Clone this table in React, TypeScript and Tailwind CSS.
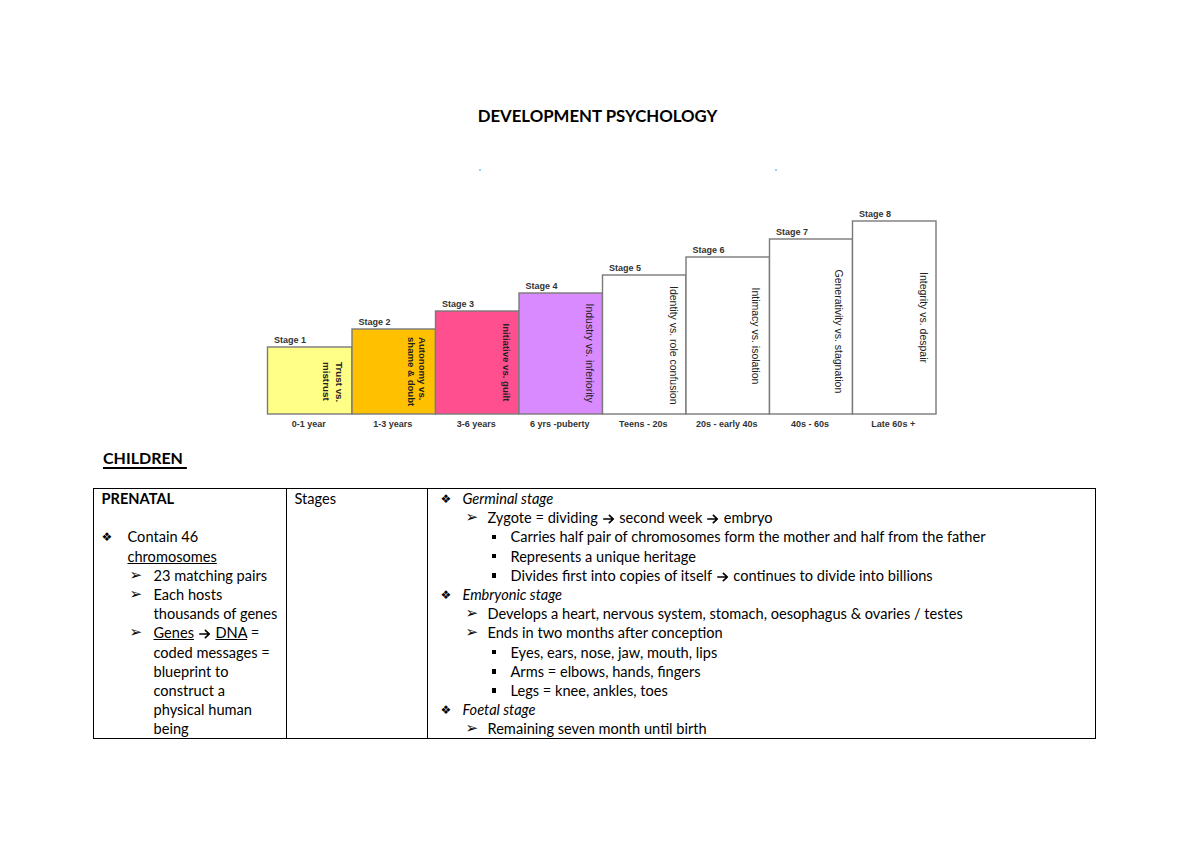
import React from "react";

const stages = [
  { n: 1, fill: "#FFFF88", top: 347, age: "0-1 year", lines: ["Trust vs.", "mistrust"], cx: [340, 327], ty: 362, bold: true, fs: 9.8 },
  { n: 2, fill: "#FFC000", top: 329, age: "1-3 years", lines: ["Autonomy vs.", "shame & doubt"], cx: [422.3, 411.7], ty: 337, bold: true, fs: 9.6 },
  { n: 3, fill: "#FF4F8F", top: 311, age: "3-6 years", lines: ["Initiative vs. guilt"], cx: [506.7], ty: 323.5, bold: true, fs: 9.6 },
  { n: 4, fill: "#D98AFF", top: 293, age: "6 yrs -puberty", lines: ["Industry vs. inferiority"], cx: [590], ty: 303.5, bold: false, fs: 10.5 },
  { n: 5, fill: "#FFFFFF", top: 275, age: "Teens - 20s", lines: ["Identity vs. role confusion"], cx: [674], ty: 286, bold: false, fs: 10.5 },
  { n: 6, fill: "#FFFFFF", top: 257, age: "20s - early 40s", lines: ["Intimacy vs. isolation"], cx: [755.7], ty: 287.5, bold: false, fs: 10.5 },
  { n: 7, fill: "#FFFFFF", top: 239, age: "40s - 60s", lines: ["Generativity vs. stagnation"], cx: [839], ty: 269.5, bold: false, fs: 10.5 },
  { n: 8, fill: "#FFFFFF", top: 221, age: "Late 60s +", lines: ["Integrity vs. despair"], cx: [923.3], ty: 272, bold: false, fs: 10.5 },
];

const lefts = [267.5, 352, 435.5, 519, 602.5, 686, 769.5, 852.5, 936];

function Chart() {
  return (
    <svg width="700" height="240" viewBox="255 200 700 240" className="block ml-[255px]">
      {stages.map((s, i) => {
        const x = lefts[i];
        const w = lefts[i + 1] - x;
        return (
          <g key={s.n}>
            <rect x={x} y={s.top} width={w} height={414 - s.top} fill={s.fill} stroke="#7a7a7a" strokeWidth="1.4" />
            <text x={x + 6.5} y={s.top - 4.5} fontFamily="'Liberation Sans', Arial, sans-serif" fontWeight="bold" fontSize="9" fill="#333">
              Stage {s.n}
            </text>
            <text x={x + w / 2 - 1} y={427} textAnchor="middle" fontFamily="'Liberation Sans', Arial, sans-serif" fontWeight="bold" fontSize="9" fill="#333">
              {s.age}
            </text>
            {s.lines.map((l, j) => (
              <text
                key={j}
                x={s.cx[j] - 3.6}
                y={s.ty}
                transform={`rotate(90 ${s.cx[j] - 3.6} ${s.ty})`}
                fontFamily="'Liberation Sans', Arial, sans-serif"
                fontWeight={s.bold ? "bold" : "normal"}
                fontSize={s.fs}
                fill="#222"
              >
                {l}
              </text>
            ))}
          </g>
        );
      })}
    </svg>
  );
}

function Diamond() {
  return <span className="font-['DejaVu_Sans',sans-serif] text-[12px] leading-none">❖</span>;
}
function Arrow() {
  return <span className="font-['DejaVu_Sans',sans-serif] text-[15px] leading-none">➢</span>;
}
function Square() {
  return <span className="block w-[4.5px] h-[4.5px] bg-black ml-[1px]" />;
}
function R() {
  return (
    <svg width="12" height="10" viewBox="0 0 12 10" className="inline-block align-[-1px] mx-[1px]">
      <path d="M0.8 5 H10.2 M6.4 1.3 L10.3 5 L6.4 8.7" fill="none" stroke="#000" strokeWidth="1.7" strokeLinecap="round" strokeLinejoin="round" />
    </svg>
  );
}

function L({ children, pad, bw, bullet }: { children?: React.ReactNode; pad: string; bw: string; bullet?: React.ReactNode }) {
  return (
    <div className={`flex h-[19.2px] items-center whitespace-nowrap ${pad}`}>
      <span className={`${bw} shrink-0 flex items-center`}>{bullet}</span>
      <span>{children}</span>
    </div>
  );
}

export default function App() {
  return (
    <div className="w-[1200px] h-[848px] bg-white text-black overflow-hidden font-['Lato','Open_Sans',sans-serif] text-[14.6px]">
      <div className="pt-[105px] h-[126px] text-center">
        <div className="ml-[-5px] font-bold text-[16.8px] leading-[21px]">DEVELOPMENT PSYCHOLOGY</div>
      </div>
      <div className="h-[74px] pt-[43px] flex">
        <div className="ml-[479px] w-[2px] h-[2px] bg-[#8fd8f2]" />
        <div className="ml-[294px] w-[2px] h-[2px] bg-[#8fd8f2]" />
      </div>
      <Chart />
      <div className="h-[48px] pt-[8px] pl-[103px]">
        <span className="font-bold text-[16px] leading-[20px] underline underline-offset-[3px] decoration-[1.5px]">CHILDREN&nbsp;</span>
      </div>
      <div className="ml-[93px] w-[1003px] border-[1.5px] border-black flex leading-[19.2px]">
        <div className="w-[192px] shrink-0">
          <div className="pl-[7.5px] h-[19.2px] flex items-center font-bold">PRENATAL</div>
          <div className="h-[19.2px]" />
          <L pad="pl-[7.5px]" bw="w-[26px]" bullet={<Diamond />}>Contain 46</L>
          <L pad="pl-[7.5px]" bw="w-[26px]"><span className="underline">chromosomes</span></L>
          <L pad="pl-[35.5px]" bw="w-[24px]" bullet={<Arrow />}>23 matching pairs</L>
          <L pad="pl-[35.5px]" bw="w-[24px]" bullet={<Arrow />}>Each hosts</L>
          <L pad="pl-[35.5px]" bw="w-[24px]">thousands of genes</L>
          <L pad="pl-[35.5px]" bw="w-[24px]" bullet={<Arrow />}>
            <span className="underline">Genes</span> <R /> <span className="underline">DNA</span> =
          </L>
          <L pad="pl-[35.5px]" bw="w-[24px]">coded messages =</L>
          <L pad="pl-[35.5px]" bw="w-[24px]">blueprint to</L>
          <L pad="pl-[35.5px]" bw="w-[24px]">construct a</L>
          <L pad="pl-[35.5px]" bw="w-[24px]">physical human</L>
          <L pad="pl-[35.5px]" bw="w-[24px]">being</L>
        </div>
        <div className="w-[141px] shrink-0 border-l-[1.5px] border-black">
          <div className="pl-[7.5px] h-[19.2px] flex items-center">Stages</div>
        </div>
        <div className="flex-1 border-l-[1.5px] border-black">
          <L pad="pl-[12.5px]" bw="w-[22px]" bullet={<Diamond />}><i>Germinal stage</i></L>
          <L pad="pl-[37.5px]" bw="w-[22px]" bullet={<Arrow />}>
            Zygote = dividing <R /> second week <R /> embryo
          </L>
          <L pad="pl-[62.5px]" bw="w-[20px]" bullet={<Square />}>Carries half pair of chromosomes form the mother and half from the father</L>
          <L pad="pl-[62.5px]" bw="w-[20px]" bullet={<Square />}>Represents a unique heritage</L>
          <L pad="pl-[62.5px]" bw="w-[20px]" bullet={<Square />}>
            Divides first into copies of itself <R /> continues to divide into billions
          </L>
          <L pad="pl-[12.5px]" bw="w-[22px]" bullet={<Diamond />}><i>Embryonic stage</i></L>
          <L pad="pl-[37.5px]" bw="w-[22px]" bullet={<Arrow />}>Develops a heart, nervous system, stomach, oesophagus &amp; ovaries / testes</L>
          <L pad="pl-[37.5px]" bw="w-[22px]" bullet={<Arrow />}>Ends in two months after conception</L>
          <L pad="pl-[62.5px]" bw="w-[20px]" bullet={<Square />}>Eyes, ears, nose, jaw, mouth, lips</L>
          <L pad="pl-[62.5px]" bw="w-[20px]" bullet={<Square />}>Arms = elbows, hands, fingers</L>
          <L pad="pl-[62.5px]" bw="w-[20px]" bullet={<Square />}>Legs = knee, ankles, toes</L>
          <L pad="pl-[12.5px]" bw="w-[22px]" bullet={<Diamond />}><i>Foetal stage</i></L>
          <L pad="pl-[37.5px]" bw="w-[22px]" bullet={<Arrow />}>Remaining seven month until birth</L>
        </div>
      </div>
    </div>
  );
}
